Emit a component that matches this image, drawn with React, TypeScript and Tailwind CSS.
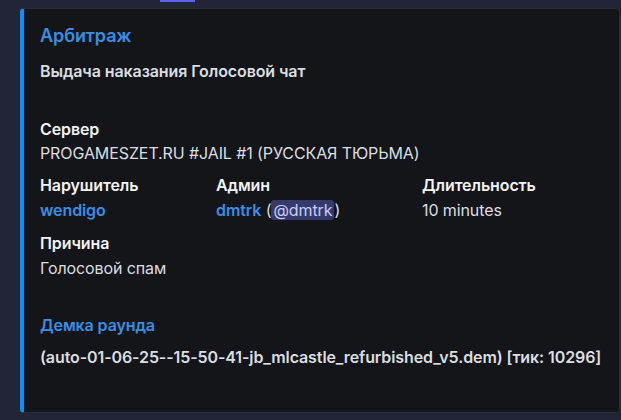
export default function App() {
  const font = { fontFamily: 'Inter, "Noto Sans", "Liberation Sans", sans-serif' };

  return (
    <div className="w-[621px] h-[420px] bg-[#222437] overflow-hidden tracking-[-0.1px]" style={font}>
      <div className="ml-[160px] w-[35px] h-[2px] bg-[#5865f2]" />
      <div className="ml-[20px] mt-[6px] w-[600px] h-[405px] rounded-[4px] border border-[#2b2d35] border-l-4 border-l-[#0094ff] bg-[#141518] pl-[16px] pt-[16px]">
        <div className="text-[18px] leading-[22px] font-semibold text-[#3a8ee6]">Арбитраж</div>
        <div className="mt-[14px] text-[16px] leading-[20px] font-semibold text-[#dbdee1]">
          Выдача наказания Голосовой чат
        </div>

        <div className="mt-[38px] text-[16px] leading-[20px] font-semibold text-[#f2f3f5]">Сервер</div>
        <div className="mt-[4px] text-[16px] leading-[20px] text-[#dbdee1]">
          PROGAMESZET.RU #JAIL #1 (РУССКАЯ ТЮРЬМА)
        </div>

        <div className="mt-[12px] grid grid-cols-[176px_206px_1fr]">
          <div>
            <div className="text-[16px] leading-[20px] font-semibold text-[#f2f3f5]">Нарушитель</div>
            <div className="mt-[5px] text-[16px] leading-[20px] font-semibold text-[#3a8ee6]">wendigo</div>
          </div>
          <div>
            <div className="text-[16px] leading-[20px] font-semibold text-[#f2f3f5]">Админ</div>
            <div className="mt-[5px] text-[16px] leading-[20px] text-[#dbdee1]">
              <span className="font-semibold text-[#3a8ee6]">dmtrk</span>{" "}
              (<span className="rounded-[3px] bg-[#353a6b] px-[2px] text-[#c9cdfb]">@dmtrk</span>)
            </div>
          </div>
          <div>
            <div className="text-[16px] leading-[20px] font-semibold text-[#f2f3f5]">Длительность</div>
            <div className="mt-[5px] text-[16px] leading-[20px] text-[#dbdee1]">10 minutes</div>
          </div>
        </div>

        <div className="mt-[13px] text-[16px] leading-[20px] font-semibold text-[#f2f3f5]">Причина</div>
        <div className="mt-[5px] text-[16px] leading-[20px] text-[#dbdee1]">Голосовой спам</div>

        <div className="mt-[37px] text-[16px] leading-[20px] font-semibold text-[#3a8ee6]">Демка раунда</div>
        <div className="mt-[12px] text-[16px] leading-[20px] font-semibold text-[#dbdee1]">
          (auto-01-06-25--15-50-41-jb_mlcastle_refurbished_v5.dem) [тик: 10296]
        </div>
      </div>
    </div>
  );
}
